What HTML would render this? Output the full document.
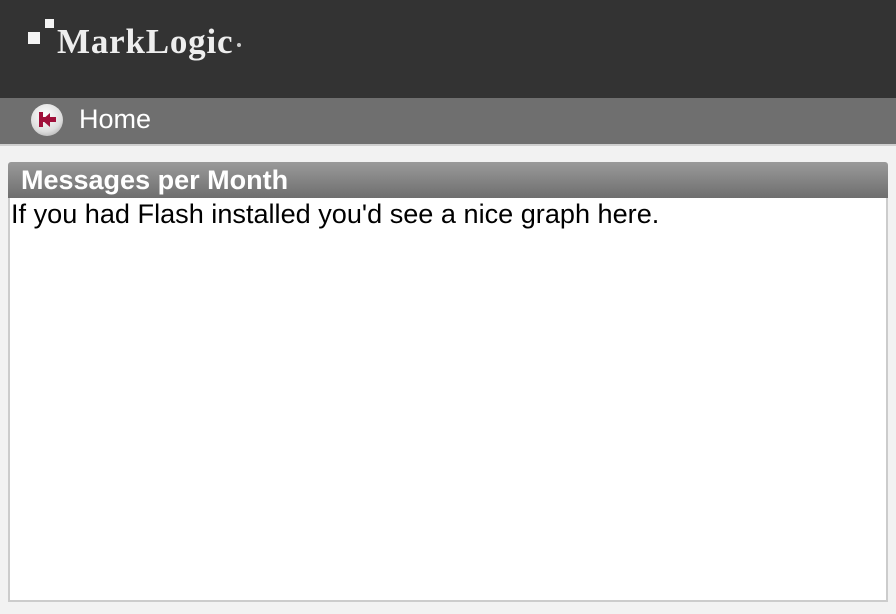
<!DOCTYPE html>
<html><head><style>
html,body{margin:0;padding:0;width:896px;height:614px;background:#f2f2f2;overflow:hidden;font-family:"Liberation Sans",Arial,sans-serif}
#hdr{position:absolute;left:0;top:0;width:896px;height:98px;background:#333}
.sq1{position:absolute;left:28px;top:32px;width:12px;height:12px;background:#f4f4f4}
.sq2{position:absolute;left:45px;top:19px;width:9px;height:9px;background:#f4f4f4}
.logo{position:absolute;left:57px;top:22px;font-family:"Liberation Serif",serif;font-weight:bold;font-size:35px;color:#eee;letter-spacing:0.8px}
.dot{position:absolute;left:237px;top:43px;width:4px;height:4px;border-radius:2px;background:#ccc}
#nav{position:absolute;left:0;top:98px;width:896px;height:46px;background:#6f6f6f;border-bottom:2px solid #cfcfcf}
.ic{position:absolute;left:31px;top:104px;width:32px;height:32px;border-radius:50%;background:radial-gradient(circle at 45% 35%,#fff,#ddd 60%,#999);}
.ic i{position:absolute;left:8px;top:8px;width:4px;height:15px;background:#a0103a}
.ic b{position:absolute;left:12px;top:13px;width:13px;height:5px;background:#a0103a}
.ic u{position:absolute;left:11px;top:9px;width:0;height:0;border-top:7px solid transparent;border-bottom:7px solid transparent;border-right:8px solid #a0103a}
.home{position:absolute;left:79px;top:104px;color:#fff;font-size:27px}
#panel{position:absolute;left:8px;top:162px;width:880px;height:442px}
.ttl{height:36px;background:linear-gradient(#9a9a9a,#6e6e6e);border-radius:3px 3px 0 0;color:#fff;font-weight:bold;font-size:27px;line-height:36px;padding-left:13px}
.body{position:absolute;left:0;top:36px;width:876px;height:402px;background:#fff;border:2px solid #ccc;border-top:none}
.body p{margin:0;padding:1px 0 0 1px;font-size:27.1px;color:#000;line-height:30px}
</style></head><body>
<div id="hdr"><div class="sq1"></div><div class="sq2"></div><div class="logo">MarkLogic</div><div class="dot"></div></div>
<div id="nav"></div>
<div class="ic"><i></i><u></u><b></b></div>
<div class="home">Home</div>
<div id="panel"><div class="ttl">Messages per Month</div><div class="body"><p>If you had Flash installed you'd see a nice graph here.</p></div></div>
</body></html>
